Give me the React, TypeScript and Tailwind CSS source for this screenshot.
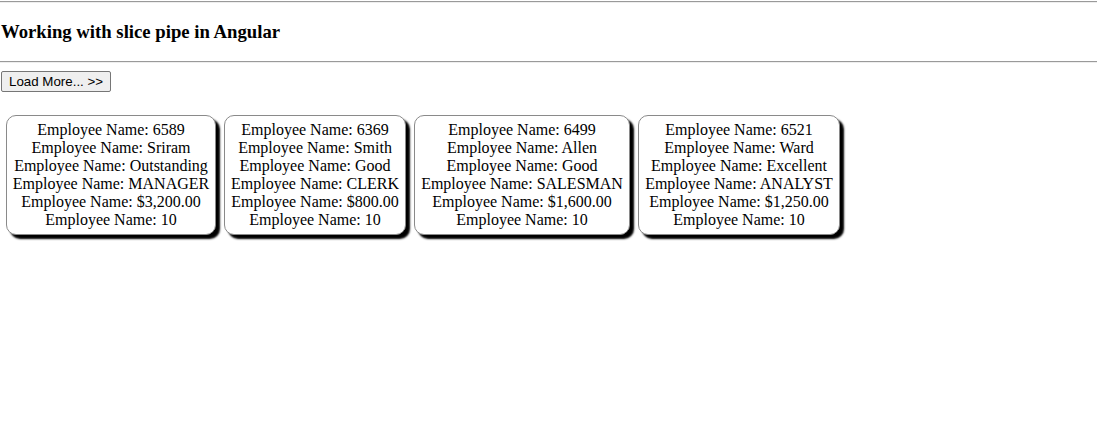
const employees = [
  { w: 'w-[210px]', vals: ['6589', 'Sriram', 'Outstanding', 'MANAGER', '$3,200.00', '10'] },
  { w: 'w-[182px]', vals: ['6369', 'Smith', 'Good', 'CLERK', '$800.00', '10'] },
  { w: 'w-[216px]', vals: ['6499', 'Allen', 'Good', 'SALESMAN', '$1,600.00', '10'] },
  { w: 'w-[202px]', vals: ['6521', 'Ward', 'Excellent', 'ANALYST', '$1,250.00', '10'] },
]

function Rule() {
  return <div className="h-[2px] w-full border-t border-t-[#9a9a9a] border-b border-b-[#eeeeee]" />
}

export default function App() {
  return (
    <div className="min-h-[428px] w-full bg-white text-black font-['Liberation_Serif',serif] pt-[1px]">
      <Rule />
      <h3 className="mt-[17.5px] mb-[19px] px-[1px] text-[18.72px] leading-[21.5px] font-bold">
        Working with slice pipe in Angular
      </h3>
      <Rule />

      <div className="mt-[8px] flex px-[1px]">
        <button className="h-[21px] px-[7px] border border-[#767676] rounded-[2px] bg-[#efefef] text-[13.33px] leading-[15px] text-black font-['Liberation_Sans',sans-serif]">
          Load More... &gt;&gt;
        </button>
      </div>

      {/* Employee cards */}
      <div className="mt-[23px] flex items-start gap-[8px] pl-[6px]">
        {employees.map((emp) => (
          <div
            key={emp.vals[0]}
            className={`${emp.w} border border-[#8a8a8a] rounded-[10px] py-[5px] text-center text-[16px] leading-[18px] shadow-[4px_4px_2px_#000] bg-white whitespace-nowrap`}
          >
            {emp.vals.map((v, i) => (
              <div key={i}>Employee Name: {v}</div>
            ))}
          </div>
        ))}
      </div>
    </div>
  )
}
